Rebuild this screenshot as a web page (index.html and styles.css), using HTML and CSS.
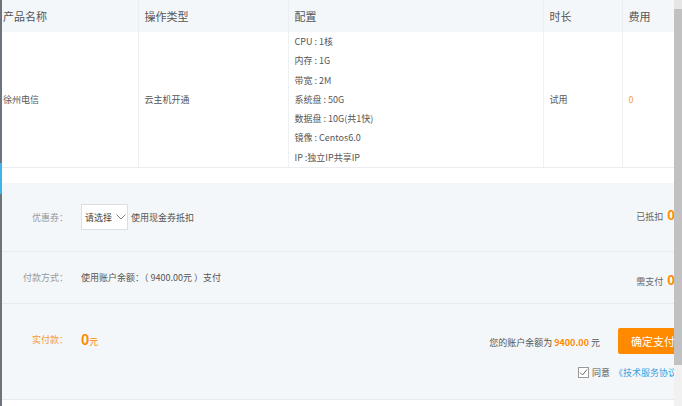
FILE: index.html
```html
<!DOCTYPE html>
<html lang="zh-CN">
<head>
    <meta charset="UTF-8">
    <meta name="viewport" content="width=device-width, initial-scale=1.0">
    <title>确认订单</title>
    <link rel="stylesheet" href="styles.css">
</head>
<body>
    <div class="frame">
        <div class="view">
            <!-- 订单明细 -->
            <table class="order">
                <colgroup>
                    <col class="c-name">
                    <col class="c-type">
                    <col class="c-conf">
                    <col class="c-time">
                    <col>
                </colgroup>
                <thead>
                    <tr>
                        <th>产品名称</th>
                        <th>操作类型</th>
                        <th>配置</th>
                        <th>时长</th>
                        <th>费用</th>
                    </tr>
                </thead>
                <tbody>
                    <tr>
                        <td>徐州电信</td>
                        <td>云主机开通</td>
                        <td class="conf">
                            <p>CPU : 1核</p>
                            <p>内存 : 1G</p>
                            <p>带宽 : 2M</p>
                            <p>系统盘 : 50G</p>
                            <p>数据盘 : 10G(共1快)</p>
                            <p>镜像 : Centos6.0</p>
                            <p>IP :独立IP共享IP</p>
                        </td>
                        <td>试用</td>
                        <td class="fee">0</td>
                    </tr>
                </tbody>
            </table>

            <!-- 支付 -->
            <div class="pay">
                <div class="pay-row coupon">
                    <span class="label">优惠券：</span>
                    <div class="select">
                        <span>请选择</span>
                        <svg width="10" height="6" viewBox="0 0 10 6"><path d="M0.5 0.5 L5 5 L9.5 0.5" fill="none" stroke="#777" stroke-width="0.9"/></svg>
                    </div>
                    <span>使用现金券抵扣</span>
                    <span class="side">已抵扣 <b class="num">0元</b></span>
                </div>
                <div class="pay-row method">
                    <span class="label">付款方式：</span>
                    <span>使用账户余额：（ 9400.00元 ）支付</span>
                    <span class="side">需支付 <b class="num">0元</b></span>
                </div>
                <div class="pay-row total">
                    <div class="total-left">
                        <span class="label orange">实付款：</span>
                        <span class="amount"><b>0</b>元</span>
                    </div>
                    <div class="confirm">
                        <div class="confirm-line">
                            <span>您的账户余额为 <b class="balance">9400.00</b> 元</span>
                            <button class="btn-pay">确定支付</button>
                        </div>
                        <div class="agree">
                            <span class="check">
                                <svg width="9" height="9" viewBox="0 0 9 9"><path d="M1 4.5 L3.5 7 L8 1.5" fill="none" stroke="#666" stroke-width="1"/></svg>
                            </span>
                            <span>同意</span>
                            <a href="#" class="terms">《技术服务协议》</a>
                        </div>
                    </div>
                </div>
            </div>
        </div>
        <div class="scrollbar">
            <div class="sb-top"></div>
            <div class="sb-thumb"></div>
        </div>
    </div>
</body>
</html>
```

FILE: styles.css
```css
html, body {
    margin: 0;
    padding: 0;
    height: 100%;
    overflow: hidden;
}
body {
    font-family: "Noto Sans CJK SC", "Noto Sans", sans-serif;
    font-size: 9px;
    color: #555;
    background: #fff;
}
.frame {
    display: flex;
    height: 406px;
}
.view {
    flex: 1;
    overflow: hidden;
    position: relative;
}
/* 左侧的边框条 */
.view::before {
    content: "";
    position: absolute;
    left: 0;
    top: 0;
    bottom: 0;
    width: 2px;
    background: linear-gradient(#6d737a 163px, #3db4ea 163px, #3db4ea 194px, #6d737a 194px);
    z-index: 2;
}
.order {
    width: 674px;
    border-collapse: collapse;
    table-layout: fixed;
}
.c-name { width: 138px; }
.c-type { width: 150px; }
.c-conf { width: 255px; }
.c-time { width: 79px; }
.order th {
    height: 32px;
    padding: 0 0 0 6px;
    background: #f4f7f9;
    font-size: 11px;
    font-weight: normal;
    text-align: left;
    color: #555;
    border-left: 1px solid #eaeef1;
}
.order td {
    padding: 0 0 0 6px;
    vertical-align: middle;
    border-left: 1px solid #eef1f3;
    border-bottom: 1px solid #eaedf0;
    color: #555;
}
.order th:first-child,
.order td:first-child {
    padding-left: 3px;
    border-left: none;
}
.conf p {
    margin: 0;
    line-height: 19.3px;
}
.order td.fee {
    color: #f7a04a;
}
.pay {
    width: 700px;
    margin-top: 15px;
    background: #f4f7f9;
}
.pay-row {
    display: flex;
    align-items: center;
    padding-right: 12px;
    border-bottom: 1px solid #e7ebee;
    box-sizing: border-box;
}
.coupon { height: 69px; }
.method { height: 52px; }
.total {
    height: 96px;
    align-items: flex-start;
    padding-top: 24px;
}
.label {
    width: 68px;
    margin-right: 13px;
    text-align: right;
    color: #999;
}
.label.orange {
    color: #f39a3a;
}
.select {
    display: flex;
    align-items: center;
    gap: 4px;
    width: 47px;
    height: 26px;
    box-sizing: border-box;
    padding-left: 3px;
    margin-right: 3px;
    background: #fff;
    border: 1px solid #dcdfe2;
    color: #444;
}
.side {
    margin-left: auto;
    color: #666;
}
.num {
    margin-left: 2px;
    font-size: 13px;
    color: #ff8a00;
}
.coupon .side {
    margin-top: -5px;
}
.method .side {
    margin-top: 4px;
}
.total-left {
    display: flex;
    align-items: center;
    height: 26px;
    margin-top: -2px;
}
.amount {
    color: #ff8a00;
}
.amount b {
    font-size: 14px;
}
.confirm {
    margin-left: auto;
    display: flex;
    flex-direction: column;
    align-items: flex-end;
}
.confirm-line {
    display: flex;
    align-items: center;
    margin-top: 2px;
}
.balance {
    color: #ff8a00;
}
.btn-pay {
    height: 26px;
    margin: -2px 0 0 18px;
    padding: 0 13px;
    border: none;
    border-radius: 2px;
    background: #ff8a00;
    color: #fff;
    font-family: inherit;
    font-size: 11px;
}
.agree {
    display: flex;
    align-items: center;
    margin-top: 12px;
    width: 110px;
}
.check {
    display: flex;
    align-items: center;
    justify-content: center;
    width: 11px;
    height: 11px;
    box-sizing: border-box;
    border: 1px solid #999;
    background: #fff;
    margin-right: 3px;
}
.terms {
    margin-left: 4px;
    color: #3a9ee0;
    text-decoration: none;
}
.scrollbar {
    width: 8px;
    background: #f1f1f1;
    display: flex;
    flex-direction: column;
}
.sb-top {
    height: 9px;
    background: #e6e6e6;
}
.sb-thumb {
    height: 356px;
    background: #c1c1c1;
}
```
